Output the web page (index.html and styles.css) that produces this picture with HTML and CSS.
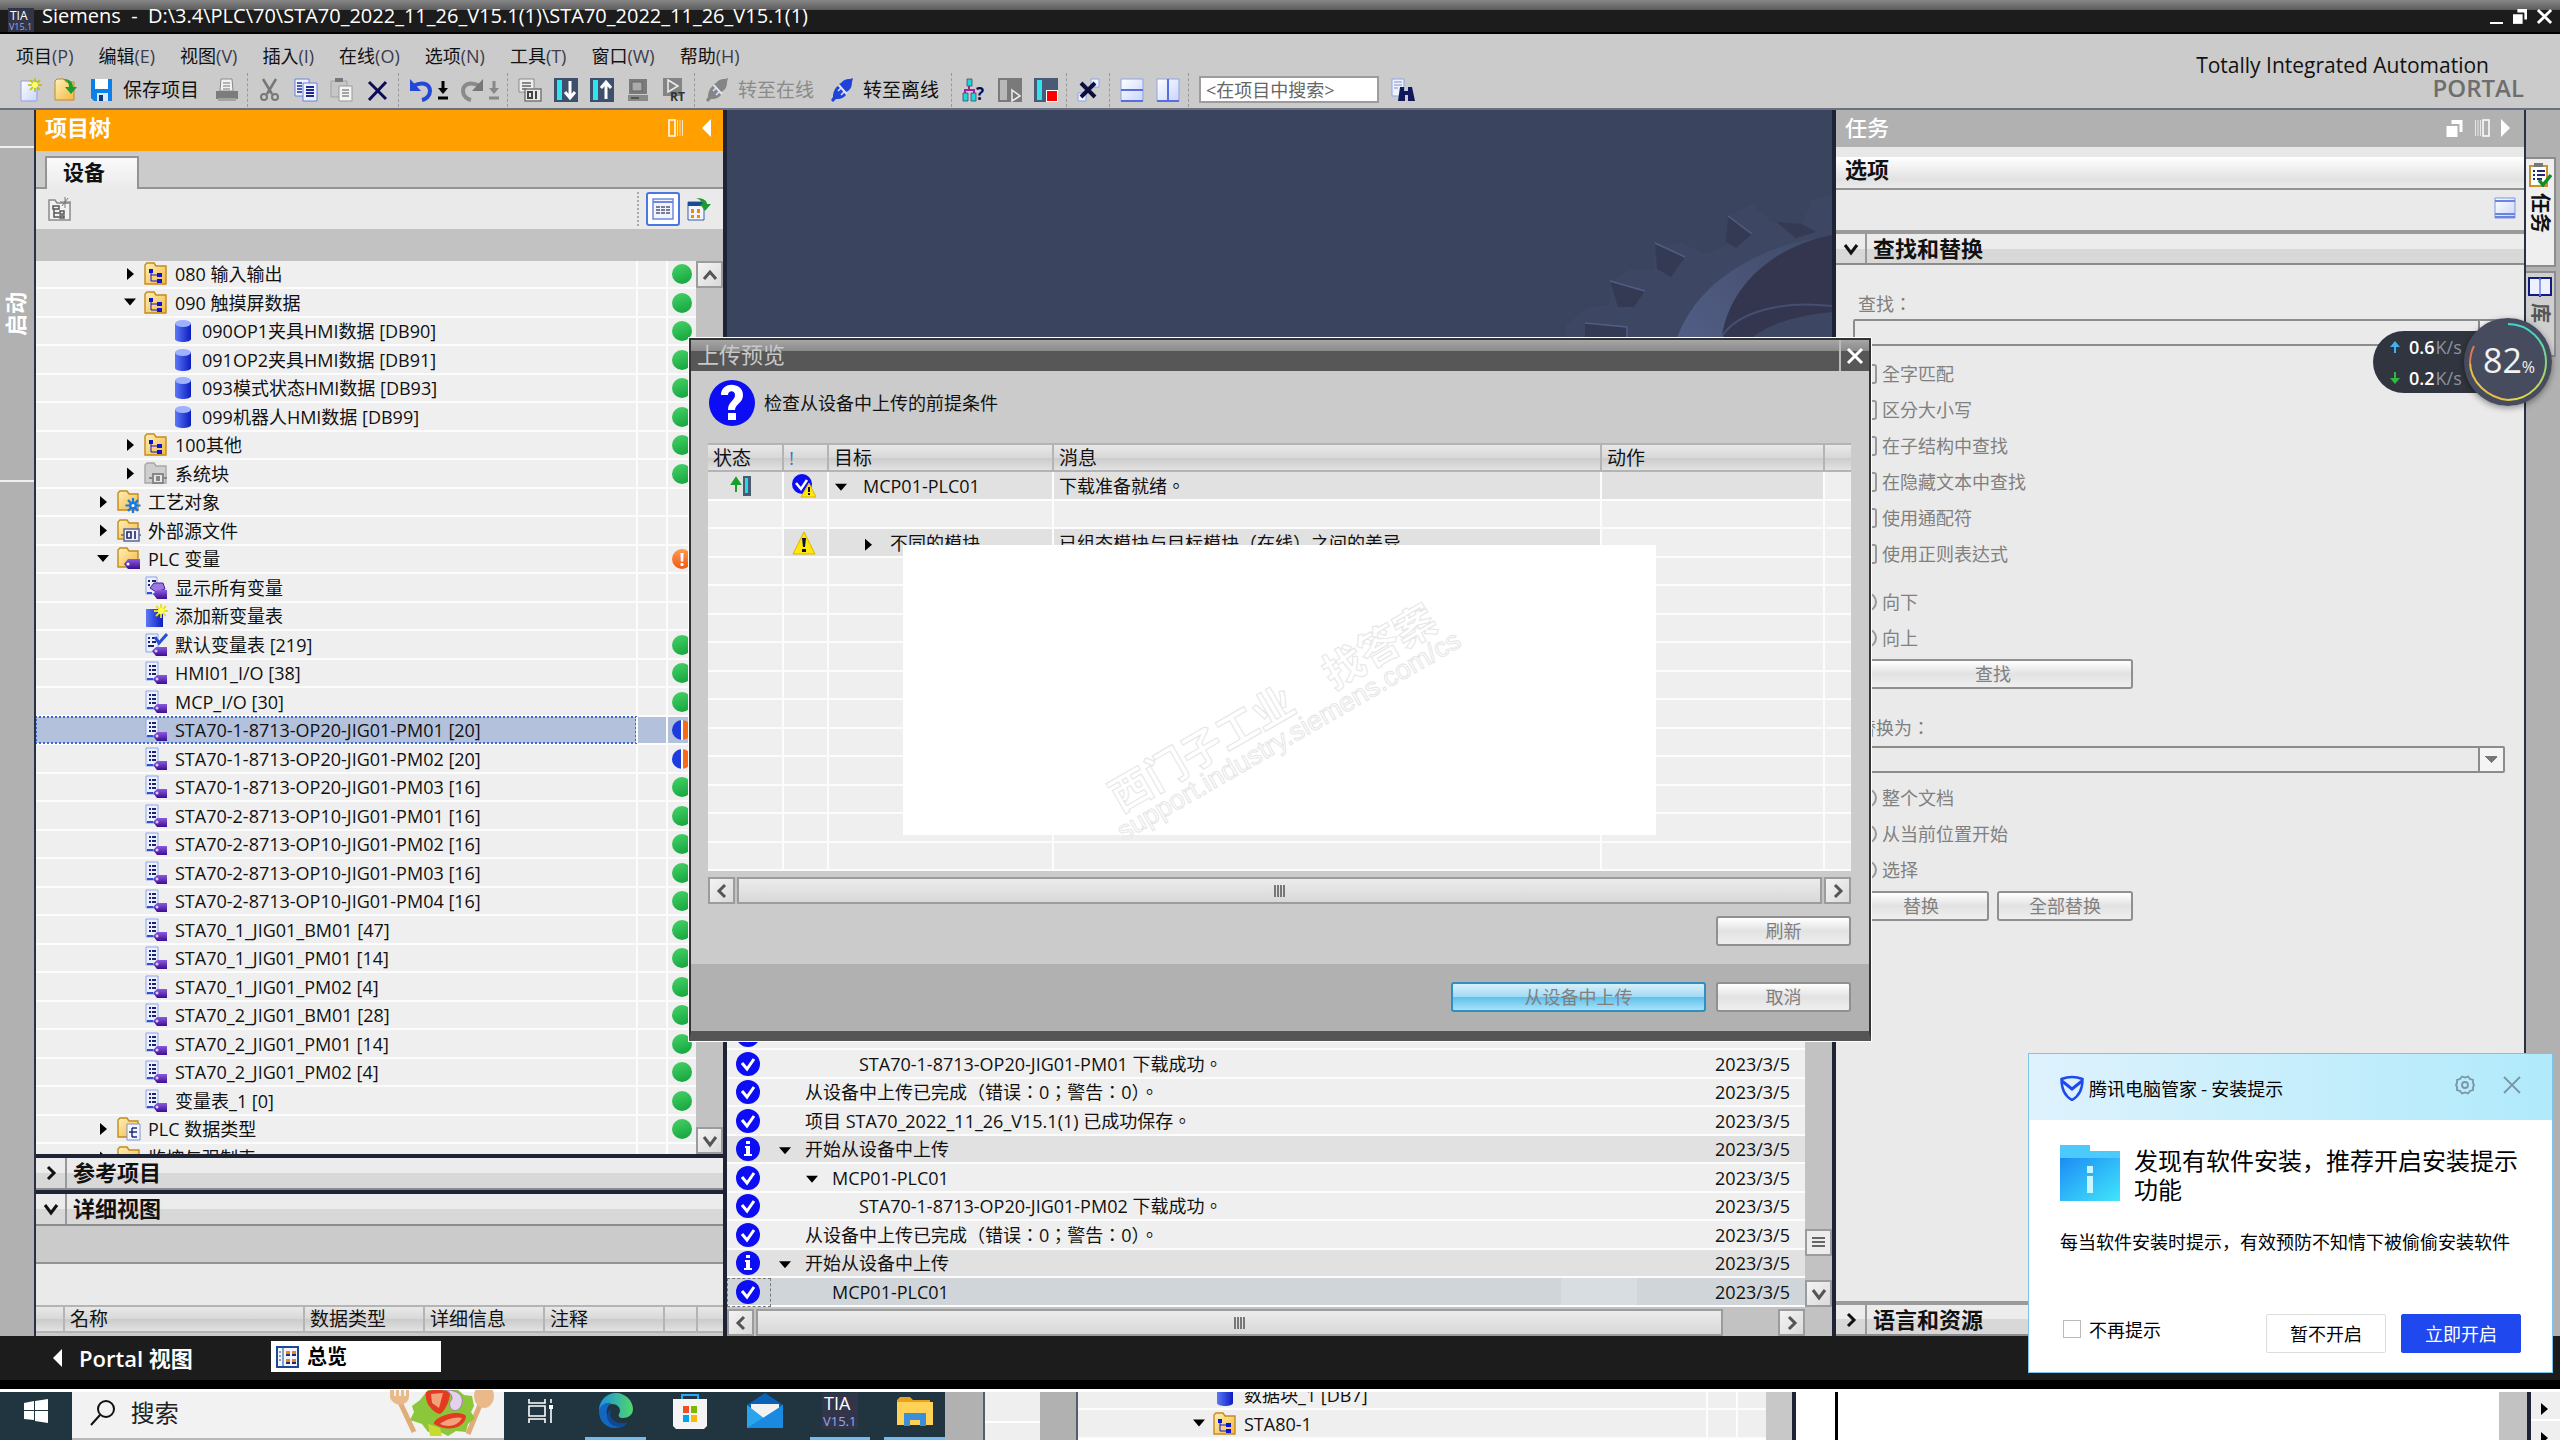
FILE: index.html
```html
<!DOCTYPE html>
<html lang="en">

<head>
  <meta charset="UTF-8">
  <meta name="viewport" content="width=device-width, initial-scale=1.0">
  <title>Siemens - STA70_2022_11_26_V15.1(1)</title>
  <link rel="stylesheet" href="styles.css">
</head>

<body>
  <!-- 图标 -->
  <svg class="sprite" width="0" height="0">
    <defs>
      <linearGradient id="gy" x1="0" y1="0" x2="1" y2="1"><stop offset="0" stop-color="#fff0b8"/><stop offset="1" stop-color="#f2b843"/></linearGradient>
      <linearGradient id="gb" x1="0" y1="0" x2="1" y2="0"><stop offset="0" stop-color="#5b78f8"/><stop offset="1" stop-color="#0c1cc0"/></linearGradient>
      <linearGradient id="gw" x1="0" y1="0" x2="1" y2="1"><stop offset="0" stop-color="#fff"/><stop offset="1" stop-color="#c9d4fb"/></linearGradient>
      <linearGradient id="gp" x1="0" y1="0" x2="0" y2="1"><stop offset="0" stop-color="#8a5be0"/><stop offset="1" stop-color="#3c0d90"/></linearGradient>
      <linearGradient id="edge1" x1="0" y1="0" x2="1" y2="0"><stop offset="0" stop-color="#1f8fe0"/><stop offset="1" stop-color="#4fd86a"/></linearGradient>
      <linearGradient id="fold" x1="0" y1="0" x2="1" y2="1"><stop offset="0" stop-color="#1c8cf5"/><stop offset="1" stop-color="#41e6fb"/></linearGradient>
      <linearGradient id="ring" x1="0" y1="0" x2="0" y2="1"><stop offset="0" stop-color="#3fd6d0"/><stop offset=".5" stop-color="#7fd680"/><stop offset="1" stop-color="#e8d84a"/></linearGradient>
      <linearGradient id="hub" x1="0" y1="1" x2="1" y2="0"><stop offset="0" stop-color="#56628c"/><stop offset="1" stop-color="#3f4966"/></linearGradient>
    </defs>
    <symbol id="folder" viewBox="0 0 24 24"><path d="M1 22V3l2-2h7l2 3h10v18z" fill="url(#gy)" stroke="#c58a1b" stroke-width="1.4"/></symbol>
    <symbol id="folder-group" viewBox="0 0 24 24"><path d="M1 22V3l2-2h7l2 3h10v18z" fill="url(#gy)" stroke="#c58a1b" stroke-width="1.4"/><path d="M5 7h4v4H5zM13 11h5v4h-5zM13 17h5v4h-5z" fill="#0a14d8"/><path d="M7 11v8h6M7 13h6" stroke="#0a14d8" fill="none"/></symbol>
    <symbol id="folder-sys" viewBox="0 0 24 24"><path d="M1 21V3l2-2h7l2 3h10v17z" fill="#cfcfcf" stroke="#a8a8a8" stroke-width="1.4"/><path d="M9 12h10v9H9zM5 16h4M19 16h4" fill="#e8e8e8" stroke="#888" stroke-width="2"/><path d="M12 14h4v5h-4z" fill="#888"/></symbol>
    <symbol id="folder-tech" viewBox="0 0 24 24"><path d="M1 20V3l2-2h7l2 3h9v16z" fill="url(#gy)" stroke="#c58a1b" stroke-width="1.4"/><path d="M16 8v15M8.500 15.500h15M11 10l10 11M21 10L11 21" stroke="#1878e8" stroke-width="2.200"/><circle cx="16" cy="15.500" r="4" fill="#1878e8"/><circle cx="16" cy="15.500" r="1.500" fill="#fff"/></symbol>
    <symbol id="folder-src" viewBox="0 0 24 24"><path d="M1 20V3l2-2h7l2 3h9v16z" fill="url(#gy)" stroke="#c58a1b" stroke-width="1.4"/><path d="M7 10h15v12H7zM4 16h3M22 16h2" fill="#eef" stroke="#5c6a94" stroke-width="1.5"/><path d="M10 13h4v6h-4zM18 12v8" fill="none" stroke="#222a60" stroke-width="1.600"/></symbol>
    <symbol id="folder-tag" viewBox="0 0 24 24"><path d="M1 20V3l2-2h7l2 3h9v16z" fill="url(#gy)" stroke="#c58a1b" stroke-width="1.4"/><path d="M7 17l4-5h12v10H11z" fill="url(#gp)"/><circle cx="11" cy="17" r="1.500" fill="#fff"/></symbol>
    <symbol id="folder-type" viewBox="0 0 24 24"><path d="M1 20V3l2-2h7l2 3h9v16z" fill="url(#gy)" stroke="#c58a1b" stroke-width="1.4"/><path d="M10 7h13v16H10z" fill="#f3f6ff" stroke="#7d92d8"/><path d="M15 11v9M15 11h5M15 15h5M15 20h5M12 15h3" stroke="#222a80" stroke-width="1.500"/></symbol>
    <symbol id="db" viewBox="0 0 24 24"><path d="M4 4v16c0 4 16 4 16 0V4z" fill="url(#gb)"/><ellipse cx="12" cy="4.500" rx="8" ry="3.500" fill="#9db1ff"/></symbol>
    <symbol id="tags" viewBox="0 0 24 24"><path d="M2 1h12v18H2z" fill="#eaf0ff" stroke="#8fa3e6"/><path d="M5 5h2M8 5h4M5 9h2M8 9h4M5 13h2M8 13h4" stroke="#1d2370" stroke-width="2"/><path d="M3 18h6" stroke="#2b50d0" stroke-width="2"/><path d="M9 18l4-4h10v9H13z" fill="url(#gp)"/><circle cx="13" cy="18" r="1.500" fill="#d8c8ff"/></symbol>
    <symbol id="tags-all" viewBox="0 0 24 24"><path d="M2 1h11v17H2z" fill="#eaf0ff" stroke="#8fa3e6"/><path d="M4 5h2M8 5h4M4 9h2" stroke="#1d2370" stroke-width="2"/><path d="M6 12l4-5h9l2 6-9 3z" fill="#9a78de" stroke="#4b1aa0"/><path d="M3 17h5" stroke="#2b50d0" stroke-width="2"/><path d="M9 18l4-4h10v9H13z" fill="url(#gp)"/></symbol>
    <symbol id="tags-new" viewBox="0 0 24 24"><path d="M2 5h17v18H2z" fill="url(#gb)"/><path d="M17 0v14M10 7h14M12 2l10 10M22 2L12 12" stroke="#e8e020" stroke-width="1.800"/><circle cx="17" cy="7" r="3" fill="#ffff50"/></symbol>
    <symbol id="tags-def" viewBox="0 0 24 24"><path d="M2 1h12v18H2z" fill="#eaf0ff" stroke="#8fa3e6"/><path d="M4 5h2M8 5h4M4 9h2M8 9h4M4 13h6" stroke="#1d2370" stroke-width="2"/><path d="M11 4l4 6 8-9" fill="none" stroke="#2450d8" stroke-width="3"/><path d="M8 18l4-4h11v9H12z" fill="url(#gp)"/><circle cx="12" cy="18" r="1.500" fill="#d8c8ff"/></symbol>
    <symbol id="check" viewBox="0 0 24 24"><circle cx="12" cy="12" r="12" fill="#0c0cf5"/><path d="M6 11l5 6 7-10" fill="none" stroke="#fff" stroke-width="3"/></symbol>
    <symbol id="info" viewBox="0 0 24 24"><circle cx="12" cy="12" r="12" fill="#0c0cf5"/><path d="M10 4h4v3h-4zM9 9h5v8h2v2H8v-2h2v-6H9z" fill="#fff"/></symbol>
    <symbol id="warn" viewBox="0 0 24 24"><path d="M12 1l11 22H1z" fill="#ffe70a" stroke="#d8b400"/><path d="M10 7h4l-1 9h-2zM10 18h4v3h-4z" fill="#0a0a50"/></symbol>
    <symbol id="check-warn" viewBox="0 0 24 24"><circle cx="10" cy="10" r="10" fill="#0c0cf5"/><path d="M4 9l5 6 6-9" fill="none" stroke="#fff" stroke-width="2.500"/><path d="M17 9l7 14H9z" fill="#ffe70a" stroke="#d8b400"/><path d="M16 13h2v5h-2zM16 19h2v2h-2z" fill="#0a0a50"/></symbol>
    <symbol id="up-plc" viewBox="0 0 24 24"><path d="M6 18V8M2 10l4-6 4 6z" stroke="#18a028" stroke-width="2" fill="#18a028"/><path d="M13 2h8v20h-8z" fill="#4a5a70"/><path d="M15 4h3v15h-3z" fill="#18e0e8"/></symbol>
    <symbol id="plug" viewBox="0 0 24 24"><path d="M11 5c3-4 7-4 9-4l3-1-1 4c0 4-1 7-4 9l-2 1-7-8zM8 8l8 9c-3 4-7 4-10 4l-3 3-2-2 2-3c0-5 2-9 5-11z" fill="currentColor"/><path d="M9 7l8 9M8 13l3-3M11 17l3-3" stroke="#dfe5ff" stroke-width="1.500"/></symbol>
    <symbol id="dock" viewBox="0 0 16 18"><path d="M1 1h6v16H1z" fill="none" stroke="#fff" stroke-width="1.500"/><path d="M9.500 1v16M12 1v16M14.500 1v16" stroke="#fff" stroke-opacity=".7"/></symbol>
    <symbol id="restore" viewBox="0 0 16 18"><path d="M5 1h11v12h-3V5H5z" fill="#fff"/><path d="M0 7h11v11H0z" fill="#fff"/></symbol>
    <symbol id="left" viewBox="0 0 10 18"><path d="M10 0v18L1 9z" fill="#fff"/></symbol>
    <symbol id="right" viewBox="0 0 10 18"><path d="M0 0v18l9-9z" fill="#fff"/></symbol>
    <symbol id="ch-down" viewBox="0 0 16 16"><path d="M2 4l6 8 6-8" fill="none" stroke="currentColor" stroke-width="3"/></symbol>
    <symbol id="ch-up" viewBox="0 0 16 16"><path d="M2 12l6-7 6 7" fill="none" stroke="currentColor" stroke-width="3"/></symbol>
    <symbol id="ch-right" viewBox="0 0 16 16"><path d="M5 2l6 6-6 6" fill="none" stroke="currentColor" stroke-width="3"/></symbol>
    <symbol id="ch-left" viewBox="0 0 16 16"><path d="M11 2L5 8l6 6" fill="none" stroke="currentColor" stroke-width="3"/></symbol>
    <symbol id="close" viewBox="0 0 18 18"><path d="M2 2l14 14M16 2L2 16" stroke="currentColor" stroke-width="3"/></symbol>
  </svg>

  <!-- 标题栏 -->
  <header class="titlebar">
    <svg class="logo" viewBox="0 0 26 24"><path d="M0 0h26v24H0z" fill="#323548"/><text x="2" y="12" font-size="12" fill="#fff">TIA</text><text x="1" y="22" font-size="9" fill="#98a6e8">V15.1</text></svg>
    <h1>Siemens&nbsp; -&nbsp; D:\3.4\PLC\70\STA70_2022_11_26_V15.1(1)\STA70_2022_11_26_V15.1(1)</h1>
    <div class="win-btns">
      <button aria-label="最小化"><svg width="14" height="18"><path d="M0 16h13" stroke="#fff" stroke-width="2"/></svg></button>
      <button aria-label="还原"><svg width="14" height="16"><use href="#restore"/></svg></button>
      <button aria-label="关闭"><svg width="17" height="17"><use href="#close"/></svg></button>
    </div>
  </header>

  <!-- 菜单和工具栏 -->
  <div class="menus">
    <div>
      <nav class="menu">
        <button>项目<span>(P)</span></button>
        <button>编辑<span>(E)</span></button>
        <button>视图<span>(V)</span></button>
        <button>插入<span>(I)</span></button>
        <button>在线<span>(O)</span></button>
        <button>选项<span>(N)</span></button>
        <button>工具<span>(T)</span></button>
        <button>窗口<span>(W)</span></button>
        <button>帮助<span>(H)</span></button>
      </nav>
      <div class="toolbar">
        <button aria-label="新建"><svg viewBox="0 0 24 24"><path d="M3 3h16v20H3z" fill="url(#gw)" stroke="#8ea0e0"/><path d="M17 0v14M10 7h14M12 2l10 10M22 2L12 12" stroke="#b8c000" stroke-width="1.600"/><circle cx="17" cy="7" r="3" fill="#ffff60"/></svg></button>
        <button aria-label="打开"><svg viewBox="0 0 24 24"><path d="M1 22V3l2-2h7l2 3h8v18z" fill="url(#gy)" stroke="#c58a1b"/><path d="M9 1c7 0 10 3 10 8h4l-6 7-6-7h4c0-4-2-6-6-8z" fill="#1d9a30"/></svg></button>
        <button aria-label="保存项目"><svg viewBox="0 0 24 24"><path d="M1 1h21v22H4l-3-3z" fill="#0a80e8"/><path d="M5 1h13v10H5z" fill="#fff"/><path d="M7 15h11v8H7z" fill="#d8e8f8"/><path d="M9 17h4v6H9z" fill="#0a3a80"/></svg><span>保存项目</span></button>
        <button aria-label="打印"><svg viewBox="0 0 24 24"><path d="M6 1h11l1 12H5z" fill="#f2f2f2" stroke="#888"/><path d="M8 5h7M8 8h7M8 11h7" stroke="#777"/><path d="M1 13h22v8H1z" fill="#7c7c7c"/><path d="M3 20h18v3H3z" fill="#a2a2a2"/></svg></button>
        <i class="sep"></i>
        <button aria-label="剪切"><svg viewBox="0 0 24 24"><path d="M5 1l9 15M18 1L9 16" stroke="#777" stroke-width="2.500"/><circle cx="6" cy="19" r="3" fill="none" stroke="#777" stroke-width="2"/><circle cx="17" cy="19" r="3" fill="none" stroke="#777" stroke-width="2"/></svg></button>
        <button aria-label="复制"><svg viewBox="0 0 24 24"><path d="M1 1h14v17H1z" fill="#eef2ff" stroke="#6a80d8"/><path d="M3 5h5M3 8h5M3 11h5M3 14h5" stroke="#1c2a90" stroke-width="1.500"/><path d="M9 5h14v18H9z" fill="#eef2ff" stroke="#6a80d8"/><path d="M12 9h8M12 12h8M12 15h8M12 18h8" stroke="#1c2a90" stroke-width="2"/></svg></button>
        <button aria-label="粘贴"><svg viewBox="0 0 24 24"><path d="M1 3h16v16H1z" fill="#c6c6c6" stroke="#a2a2a2"/><path d="M5 0h8v4H5z" fill="#777"/><path d="M9 8h13v15H9z" fill="#f4f4f4" stroke="#999"/><path d="M12 12h7M12 15h7M12 18h7" stroke="#888" stroke-width="1.500"/></svg></button>
        <button aria-label="删除"><svg viewBox="0 0 24 24"><path d="M3 4l17 17M20 4L3 22" stroke="#0c0c58" stroke-width="3"/></svg></button>
        <i class="sep"></i>
        <button class="undo" aria-label="撤销"><svg viewBox="0 0 24 24"><path d="M4 8c12-6 17 0 17 5s-4 8-8 9" fill="none" stroke="#2348d8" stroke-width="4"/><path d="M1 1v12h11z" fill="#2348d8"/></svg><svg class="pm" viewBox="0 0 10 20"><path d="M5 1v9M0 18h10" stroke="#000" stroke-width="3"/><path d="M0 8h10l-5 6z" fill="#000"/></svg></button>
        <button class="undo" aria-label="重做"><svg viewBox="0 0 24 24"><path d="M20 8C8 2 3 8 3 13s4 8 8 9" fill="none" stroke="#8a8a8a" stroke-width="4"/><path d="M23 1v12H12z" fill="#777"/></svg><svg class="pm" viewBox="0 0 10 20"><path d="M5 1v9M0 18h10" stroke="#888" stroke-width="3"/><path d="M0 8h10l-5 6z" fill="#888"/></svg></button>
        <i class="sep"></i>
        <button aria-label="编译"><svg viewBox="0 0 24 24"><path d="M1 1h15v13H1z" fill="#efefef" stroke="#8a8a8a"/><path d="M4 5h9M4 8h9M4 11h5" stroke="#666" stroke-width="1.500"/><path d="M7 11h16v12H7z" fill="#e8e8e8" stroke="#777" stroke-width="1.500"/><path d="M10 14h4v6h-4zM18 13v8" fill="none" stroke="#444" stroke-width="2"/></svg></button>
        <button aria-label="下载到设备"><svg viewBox="0 0 24 24"><path d="M0 0h24v24H0z" fill="#3e4f6c"/><path d="M3 2h5v20H3z" fill="#2ee4ee"/><path d="M16 3v16M11 14l5 6 5-6" stroke="#fff" stroke-width="3" fill="none"/></svg></button>
        <button aria-label="从设备上传"><svg viewBox="0 0 24 24"><path d="M0 0h24v24H0z" fill="#3e4f6c"/><path d="M3 2h5v20H3z" fill="#2ee4ee"/><path d="M16 21V5M11 10l5-6 5 6" stroke="#fff" stroke-width="3" fill="none"/></svg></button>
        <button aria-label="启动仿真"><svg viewBox="0 0 24 24"><path d="M3 1h18v15H3z" fill="#7a7a7a"/><path d="M6 4h10v9H6z" fill="#aaa" stroke="#666"/><path d="M2 17h20v6H2z" fill="#888"/><path d="M5 20h8" stroke="#555" stroke-width="2"/></svg></button>
        <button aria-label="启动运行系统"><svg viewBox="0 0 24 24"><path d="M1 0h19v18H1z" fill="#848484"/><path d="M6 2l10 6-10 6z" fill="none" stroke="#eee" stroke-width="1.500"/><text x="8" y="23" font-size="12" font-weight="700" fill="#333">RT</text></svg></button>
        <i class="sep"></i>
        <button disabled><svg class="grey"><use href="#plug"/></svg><span>转至在线</span></button>
        <button><svg class="blue"><use href="#plug"/></svg><span>转至离线</span></button>
        <i class="sep"></i>
        <button aria-label="可访问的设备"><svg viewBox="0 0 24 24"><path d="M5 1h5v7H5zM1 15h5v8H1zM9 15h5v8H9z" fill="#1fd6dc" stroke="#3a4a6a" stroke-width=".8"/><path d="M7 8v4M3 15v-3h9v3" stroke="#a020a0" stroke-width="2" fill="none"/><text x="14" y="22" font-size="17" font-weight="700" fill="#0c0c58">?</text></svg></button>
        <button aria-label="启动 CPU"><svg viewBox="0 0 24 24"><path d="M0 0h24v24H0z" fill="#7a7a7a"/><path d="M2 2h7v20H2z" fill="#b8b8b8"/><path d="M14 12l8 6-8 5z" fill="#777" stroke="#eee" stroke-width="1.500"/></svg></button>
        <button aria-label="停止 CPU"><svg viewBox="0 0 24 24"><path d="M0 0h24v24H0z" fill="#4a5a76"/><path d="M3 2h5v20H3z" fill="#2ee4ee"/><path d="M12 12h12v12H12z" fill="#fff"/><path d="M13 13h10v10H13z" fill="#f00"/></svg></button>
        <i class="sep"></i>
        <button aria-label="交叉引用"><svg viewBox="0 0 24 24"><path d="M14 1h8v8h-8zM1 15h8v8H1z" fill="#eef2ff" stroke="#8fa3e6"/><path d="M4 5l14 14M18 5L4 19" stroke="#0c0c40" stroke-width="4"/></svg></button>
        <i class="sep"></i>
        <button aria-label="水平拆分"><svg viewBox="0 0 24 24"><path d="M1 1h22v22H1z" fill="url(#gw)" stroke="#8fa3e6"/><path d="M1 12h22M1 23h22" stroke="#5470e0" stroke-width="2"/></svg></button>
        <button aria-label="垂直拆分"><svg viewBox="0 0 24 24"><path d="M1 1h22v22H1z" fill="url(#gw)" stroke="#8fa3e6"/><path d="M12 1v22M1 23h22" stroke="#5470e0" stroke-width="2"/></svg></button>
        <i class="sep"></i>
        <input type="text" aria-label="在项目中搜索" placeholder="&lt;在项目中搜索&gt;">
        <button aria-label="搜索"><svg viewBox="0 0 24 24"><path d="M1 1h12v17H1z" fill="#eef2ff" stroke="#8fa3e6"/><path d="M3 4h8M3 7h8M3 10h4" stroke="#8090c8"/><path d="M9 9h4v4h4V9h4l3 14h-7v-6h-3v6H7z" fill="#10185a"/></svg></button>
      </div>
    </div>
    <div class="brand">
      <p>Totally Integrated Automation</p>
      <strong>PORTAL</strong>
    </div>
  </div>

  <main class="work">
    <aside class="strip-left"><div class="gap"></div><button>启动</button></aside>

    <!-- 项目树 -->
    <section class="tree-panel">
      <div class="tree-title">
        <h2>项目树</h2>
        <svg width="16" height="18"><use href="#dock"/></svg>
        <svg width="10" height="18"><use href="#left"/></svg>
      </div>
      <div class="tabs"><button>设备</button></div>
      <div class="tree-tools">
        <svg width="24" height="24" viewBox="0 0 24 24"><path d="M1 23V3h6l2 3h13v17z" fill="#f2f2f2" stroke="#8a8a8a" stroke-width="1.500"/><path d="M5 9h6v3H5zM6 12v8h5M6 16h5M12 14h4v3h-4zM12 19h4v2h-4z" stroke="#555" fill="none" stroke-width="1.500"/><path d="M17 0v11M12 5h11M20 1l-6 8" stroke="#777"/></svg>
        <i class="dots"></i>
        <button class="on" aria-label="列表"><svg width="22" height="22" viewBox="0 0 22 22"><path d="M1 1h20v20H1z" fill="#f2f5ff" stroke="#7088dc" stroke-width="1.500"/><path d="M1 4h20" stroke="#7088dc" stroke-width="2"/><path d="M4 9h14M4 12h14M4 15h14" stroke="#4c5470" stroke-width="1.500" stroke-dasharray="4 1"/></svg></button>
        <button aria-label="导出"><svg width="24" height="24" viewBox="0 0 24 24"><path d="M1 5h16v18H1z" fill="#f4f4ff" stroke="#3c5ca0"/><path d="M1 5h16v4H1z" fill="#1c4a90"/><path d="M4 12h3v4H4zM10 12h3v4h-3zM4 18h3v3H4zM10 18h3v3h-3z" fill="#e88a10"/><path d="M9 1c8 0 11 3 11 6h4l-6 7-5-7h3c-1-3-3-4-7-6z" fill="#1d9a30"/></svg></button>
      </div>
      <div class="band"></div>
      <div class="tree-body">
        <ul class="tree">
          <li class="l3"><div><i class="arrow right"></i><svg><use href="#folder-group"/></svg>080 输入输出</div><span></span><span><b class="ok"></b></span></li>
          <li class="l3"><div><i class="arrow down"></i><svg><use href="#folder-group"/></svg>090 触摸屏数据</div><span></span><span><b class="ok"></b></span></li>
          <li class="l4"><div><i class="arrow"></i><svg><use href="#db"/></svg>090OP1夹具HMI数据 [DB90]</div><span></span><span><b class="ok"></b></span></li>
          <li class="l4"><div><i class="arrow"></i><svg><use href="#db"/></svg>091OP2夹具HMI数据 [DB91]</div><span></span><span><b class="ok"></b></span></li>
          <li class="l4"><div><i class="arrow"></i><svg><use href="#db"/></svg>093模式状态HMI数据 [DB93]</div><span></span><span><b class="ok"></b></span></li>
          <li class="l4"><div><i class="arrow"></i><svg><use href="#db"/></svg>099机器人HMI数据 [DB99]</div><span></span><span><b class="ok"></b></span></li>
          <li class="l3"><div><i class="arrow right"></i><svg><use href="#folder-group"/></svg>100其他</div><span></span><span><b class="ok"></b></span></li>
          <li class="l3"><div><i class="arrow right"></i><svg><use href="#folder-sys"/></svg>系统块</div><span></span><span><b class="ok"></b></span></li>
          <li class="l2"><div><i class="arrow right"></i><svg><use href="#folder-tech"/></svg>工艺对象</div><span></span><span></span></li>
          <li class="l2"><div><i class="arrow right"></i><svg><use href="#folder-src"/></svg>外部源文件</div><span></span><span></span></li>
          <li class="l2"><div><i class="arrow down"></i><svg><use href="#folder-tag"/></svg>PLC 变量</div><span></span><span><b class="alert">!</b></span></li>
          <li class="l3"><div><i class="arrow"></i><svg><use href="#tags-all"/></svg>显示所有变量</div><span></span><span></span></li>
          <li class="l3"><div><i class="arrow"></i><svg><use href="#tags-new"/></svg>添加新变量表</div><span></span><span></span></li>
          <li class="l3"><div><i class="arrow"></i><svg><use href="#tags-def"/></svg>默认变量表 [219]</div><span></span><span><b class="ok"></b></span></li>
          <li class="l3"><div><i class="arrow"></i><svg><use href="#tags"/></svg>HMI01_I/O [38]</div><span></span><span><b class="ok"></b></span></li>
          <li class="l3"><div><i class="arrow"></i><svg><use href="#tags"/></svg>MCP_I/O [30]</div><span></span><span><b class="ok"></b></span></li>
          <li class="l3 selected"><div><i class="arrow"></i><svg><use href="#tags"/></svg>STA70-1-8713-OP20-JIG01-PM01 [20]</div><span></span><span><b class="half"></b></span></li>
          <li class="l3"><div><i class="arrow"></i><svg><use href="#tags"/></svg>STA70-1-8713-OP20-JIG01-PM02 [20]</div><span></span><span><b class="half"></b></span></li>
          <li class="l3"><div><i class="arrow"></i><svg><use href="#tags"/></svg>STA70-1-8713-OP20-JIG01-PM03 [16]</div><span></span><span><b class="ok"></b></span></li>
          <li class="l3"><div><i class="arrow"></i><svg><use href="#tags"/></svg>STA70-2-8713-OP10-JIG01-PM01 [16]</div><span></span><span><b class="ok"></b></span></li>
          <li class="l3"><div><i class="arrow"></i><svg><use href="#tags"/></svg>STA70-2-8713-OP10-JIG01-PM02 [16]</div><span></span><span><b class="ok"></b></span></li>
          <li class="l3"><div><i class="arrow"></i><svg><use href="#tags"/></svg>STA70-2-8713-OP10-JIG01-PM03 [16]</div><span></span><span><b class="ok"></b></span></li>
          <li class="l3"><div><i class="arrow"></i><svg><use href="#tags"/></svg>STA70-2-8713-OP10-JIG01-PM04 [16]</div><span></span><span><b class="ok"></b></span></li>
          <li class="l3"><div><i class="arrow"></i><svg><use href="#tags"/></svg>STA70_1_JIG01_BM01 [47]</div><span></span><span><b class="ok"></b></span></li>
          <li class="l3"><div><i class="arrow"></i><svg><use href="#tags"/></svg>STA70_1_JIG01_PM01 [14]</div><span></span><span><b class="ok"></b></span></li>
          <li class="l3"><div><i class="arrow"></i><svg><use href="#tags"/></svg>STA70_1_JIG01_PM02 [4]</div><span></span><span><b class="ok"></b></span></li>
          <li class="l3"><div><i class="arrow"></i><svg><use href="#tags"/></svg>STA70_2_JIG01_BM01 [28]</div><span></span><span><b class="ok"></b></span></li>
          <li class="l3"><div><i class="arrow"></i><svg><use href="#tags"/></svg>STA70_2_JIG01_PM01 [14]</div><span></span><span><b class="ok"></b></span></li>
          <li class="l3"><div><i class="arrow"></i><svg><use href="#tags"/></svg>STA70_2_JIG01_PM02 [4]</div><span></span><span><b class="ok"></b></span></li>
          <li class="l3"><div><i class="arrow"></i><svg><use href="#tags"/></svg>变量表_1 [0]</div><span></span><span><b class="ok"></b></span></li>
          <li class="l2"><div><i class="arrow right"></i><svg><use href="#folder-type"/></svg>PLC 数据类型</div><span></span><span><b class="ok"></b></span></li>
          <li class="l2"><div><i class="arrow right"></i><svg><use href="#folder"/></svg>监控与强制表</div><span></span><span></span></li>
        </ul>
        <div class="vscroll">
          <button aria-label="向上滚动"><svg width="16" height="16"><use href="#ch-up"/></svg></button>
          <button aria-label="向下滚动"><svg width="16" height="16"><use href="#ch-down"/></svg></button>
        </div>
      </div>
      <div class="bar split"><button aria-label="展开"><svg width="16" height="16"><use href="#ch-right"/></svg></button><h2>参考项目</h2></div>
      <div class="bar split"><button aria-label="折叠"><svg width="16" height="16"><use href="#ch-down"/></svg></button><h2>详细视图</h2></div>
      <div class="detail-tabs"></div>
      <div class="detail-tools"></div>
      <table class="detail">
        <colgroup><col class="c27"><col><col class="c120"><col class="c120"><col class="c120"><col class="c33"><col class="c27"></colgroup>
        <tr><th></th><th>名称</th><th>数据类型</th><th>详细信息</th><th>注释</th><th></th><th></th></tr>
      </table>
    </section>

    <!-- 工作区和消息 -->
    <section class="center">
      <div class="canvas">
        <svg class="gear" width="300" height="300" viewBox="0 0 300 300">
          <path d="M300 34l-20 6-10 24-30-2-20-18-24 12-2 30-20 8-26-12-24 6-2 22-24 0-20 12v22l-22 4-22 16v20l-10 96h276z" fill="#3d4662"/>
          <path d="M78 121l35 10-11 16H86zM53 163l42 4v60H53zM123 83l30 14-14 20-14-8zM196 56l24 18-16 14-10-6zM270 64l-26-2 20 16 20-6z" fill="#353a54"/>
          <path d="M78 121l35 10M53 163l42 4v20M123 83l30 14M196 56l24 18" stroke="#525d86" fill="none" stroke-width="1.500"/>
          <path d="M138 220c0-80 70-132 162-145v20c-60 12-104 50-104 125z" fill="url(#hub)"/>
          <path d="M190 175c10-56 58-90 110-100v77c-40 4-76 14-92 40z" fill="#34364f"/>
          <path d="M190 176c16-24 60-36 110-30" stroke="#454f72" fill="none" stroke-width="2"/>
        </svg>
      </div>
      <div class="messages">
        <table>
          <colgroup><col class="c44"><col><col class="c76"><col class="c168"></colgroup>
          <tr><td><svg><use href="#check"/></svg></td><td class="m1"><i class="arrow down"></i>MCP01-PLC01</td><td></td><td>2023/3/5</td></tr>
          <tr><td><svg><use href="#check"/></svg></td><td class="m2"><i class="arrow"></i>STA70-1-8713-OP20-JIG01-PM01 下载成功。</td><td></td><td>2023/3/5</td></tr>
          <tr><td><svg><use href="#check"/></svg></td><td><i class="arrow"></i>从设备中上传已完成（错误：0；警告：0）。</td><td></td><td>2023/3/5</td></tr>
          <tr><td><svg><use href="#check"/></svg></td><td><i class="arrow"></i>项目 STA70_2022_11_26_V15.1(1) 已成功保存。</td><td></td><td>2023/3/5</td></tr>
          <tr class="group"><td><svg><use href="#info"/></svg></td><td><i class="arrow down"></i>开始从设备中上传</td><td></td><td>2023/3/5</td></tr>
          <tr><td><svg><use href="#check"/></svg></td><td class="m1"><i class="arrow down"></i>MCP01-PLC01</td><td></td><td>2023/3/5</td></tr>
          <tr><td><svg><use href="#check"/></svg></td><td class="m2"><i class="arrow"></i>STA70-1-8713-OP20-JIG01-PM02 下载成功。</td><td></td><td>2023/3/5</td></tr>
          <tr><td><svg><use href="#check"/></svg></td><td><i class="arrow"></i>从设备中上传已完成（错误：0；警告：0）。</td><td></td><td>2023/3/5</td></tr>
          <tr class="group"><td><svg><use href="#info"/></svg></td><td><i class="arrow down"></i>开始从设备中上传</td><td></td><td>2023/3/5</td></tr>
          <tr class="current"><td><svg><use href="#check"/></svg></td><td class="m1"><i class="arrow"></i>MCP01-PLC01</td><td></td><td>2023/3/5</td></tr>
        </table>
        <div class="vscroll">
          <div class="thumb"></div>
          <button aria-label="向下滚动"><svg width="16" height="16"><use href="#ch-down"/></svg></button>
        </div>
        <div class="hscroll">
          <button aria-label="向左滚动"><svg width="16" height="16"><use href="#ch-left"/></svg></button>
          <div class="thumb"></div>
          <button class="push" aria-label="向右滚动"><svg width="16" height="16"><use href="#ch-right"/></svg></button>
        </div>
      </div>
    </section>

    <!-- 任务卡 -->
    <section class="tasks">
      <div class="task-title">
        <h2>任务</h2>
        <svg width="17" height="18"><use href="#restore"/></svg>
        <svg class="flip" width="16" height="18"><use href="#dock"/></svg>
        <svg width="10" height="18"><use href="#right"/></svg>
      </div>
      <div class="options"><h2>选项</h2></div>
      <div class="task-tools"><svg width="22" height="22" viewBox="0 0 22 22"><path d="M1 1h20v20H1z" fill="url(#gw)" stroke="#7f96e4"/><path d="M1 4h20M1 17h20M1 20h20" stroke="#6a84e0" stroke-width="2"/></svg></div>
      <div class="bar"><button aria-label="折叠"><svg width="16" height="16"><use href="#ch-down"/></svg></button><h2>查找和替换</h2></div>
      <form class="find">
        <label for="find">查找：</label>
        <select id="find" disabled><option></option></select>
        <div class="opts">
          <label><input type="checkbox" disabled>全字匹配</label>
          <label><input type="checkbox" disabled>区分大小写</label>
          <label><input type="checkbox" disabled>在子结构中查找</label>
          <label><input type="checkbox" disabled>在隐藏文本中查找</label>
          <label><input type="checkbox" disabled>使用通配符</label>
          <label><input type="checkbox" disabled>使用正则表达式</label>
        </div>
        <div class="opts">
          <label><input type="radio" name="dir" disabled>向下</label>
          <label><input type="radio" name="dir" disabled>向上</label>
        </div>
        <div class="btns"><button class="btn" type="button" disabled>查找</button></div>
        <label for="replace">替换为：</label>
        <select id="replace" disabled><option></option></select>
        <div class="opts range">
          <label><input type="radio" name="range" disabled>整个文档</label>
          <label><input type="radio" name="range" disabled>从当前位置开始</label>
          <label><input type="radio" name="range" disabled>选择</label>
        </div>
        <div class="btns"><button class="btn" type="button" disabled>替换</button><button class="btn" type="button" disabled>全部替换</button></div>
      </form>
      <div class="bar"><button aria-label="展开"><svg width="16" height="16"><use href="#ch-right"/></svg></button><h2>语言和资源</h2></div>
    </section>

    <aside class="strip-right">
      <button class="tab-task"><svg width="24" height="24" viewBox="0 0 24 24"><path d="M2 3h17v20H2z" fill="#fff" stroke="#c9952b" stroke-width="2"/><path d="M6 0h9v4H6z" fill="#777"/><path d="M5 8h2M9 8h8M5 12h2M9 12h8M5 16h2M9 16h5" stroke="#22287a" stroke-width="2"/><path d="M11 17l4 5 8-10" fill="none" stroke="#158a26" stroke-width="3.500"/></svg>任务</button>
      <button class="tab-lib"><svg width="24" height="20" viewBox="0 0 24 20"><path d="M1 1h10l1 1 1-1h10v17H13l-1 1-1-1H1z" fill="#eef2ff" stroke="#101c80" stroke-width="2"/><path d="M12 1v18" stroke="#6a84e0" stroke-width="1.500"/></svg>库</button>
    </aside>
  </main>

  <footer class="status">
    <button class="portal"><svg width="10" height="18"><use href="#left"/></svg>Portal 视图</button>
    <button class="overview"><svg width="23" height="22" viewBox="0 0 23 22"><path d="M1 1h21v20H1z" fill="#f2f5ff" stroke="#1c4a90" stroke-width="2"/><path d="M7 2v18M3 6h2M3 10h2M3 14h2" stroke="#1c4a90"/><path d="M10 5h4v4h-4zM16 5h4v4h-4zM10 13h4v4h-4zM16 13h4v4h-4z" fill="#e88a10"/><path d="M10 9h4M16 9h4M10 17h4M16 17h4" stroke="#22287a" stroke-width="2"/></svg>总览</button>
  </footer>

  <!-- 任务栏 -->
  <div class="taskbar">
    <div class="dock">
      <button class="start" aria-label="开始"><svg width="24" height="24" viewBox="0 0 24 24"><path d="M0 4l10-2v9H0zM11 2l13-2v11H11zM0 12h10v9L0 20zM11 12h13v12l-13-2z" fill="#fff"/></svg></button>
      <label class="search">
        <svg width="26" height="26" viewBox="0 0 26 26"><circle cx="16" cy="9" r="8" fill="none" stroke="#111" stroke-width="2"/><path d="M10 15L1 25" stroke="#111" stroke-width="2"/></svg>
        <input type="text" placeholder="搜索">
        <svg width="104" height="46" viewBox="0 0 104 46">
          <path d="M8 8l16 34" stroke="#e0ac78" stroke-width="5"/><path d="M0 0h4v6h2V0h3v6h2V0h3v6h2V0h3v6c0 10-14 12-19 2z" fill="#eab98a"/><path d="M92 10L78 44" stroke="#e0ac78" stroke-width="5"/><ellipse cx="94" cy="6" rx="10" ry="12" fill="#eab98a"/>
          <path d="M30 10l8-10h30l6 5 8 1 2 10-3 6 4 6-7 6-2 8-10-1-8 5-12-6-8 2-6-8-12-4 4-8-2-6z" fill="#8cc63a"/><path d="M36 2c8-4 18-2 24 0 0 10-6 20-10 22-8-2-16-12-14-22z" fill="#e23b22"/><path d="M41 4l12-1-4 15-7-5z" fill="#f4a27c"/><path d="M44 34c-2-6 24-16 32-8 0 10-16 18-32 8z" fill="#e23b22"/><path d="M50 34c4-4 16-8 22-6-4 8-14 10-22 6z" fill="#f4a27c"/><path d="M56 0c14 0 20 8 14 18-6 6-12 0-10-6 4-4 2-8-4-12z" fill="#e3d2ea" stroke="#b277c0"/><path d="M38 34l12 4 2 8H40z" fill="#c8dc30"/>
        </svg>
      </label>
      <button class="app" aria-label="任务视图"><svg width="26" height="24" viewBox="0 0 26 24"><path d="M1 0v4h16V0M1 24v-4h16v4M1 7h16v10H1zM23 0v4M23 8v16" fill="none" stroke="#fff" stroke-width="1.600"/><path d="M21 6h4v4h-4z" fill="#fff"/></svg></button>
      <button class="app run" aria-label="Edge"><svg width="36" height="36" viewBox="0 0 36 36"><path d="M1 18A17 17 0 0135 16c0 6-5 9-10 9-4 0-5-2-4-4 3-5-1-10-7-10-7 0-12 4-13 7z" fill="url(#edge1)"/><path d="M1 18c1-6 7-9 12-8-4 3-5 8-4 12 2 7 10 11 20 8-8 9-28 6-28-12z" fill="#1268c0"/><path d="M13 16c-3 8 2 16 16 14-6 6-18 5-20-6 0-4 2-7 4-8z" fill="#0c4a98"/></svg></button>
      <button class="app" aria-label="Store"><svg width="36" height="36" viewBox="0 0 36 36"><path d="M10 8V2h16v6" fill="none" stroke="#28a8f0" stroke-width="2"/><path d="M1 6h34v27l-3 3H4l-3-3z" fill="#f4f4f4"/><path d="M11 13h6v7h-6z" fill="#f04e23"/><path d="M19 13h6v7h-6z" fill="#7db700"/><path d="M11 22h6v7h-6z" fill="#00a3ee"/><path d="M19 22h6v7h-6z" fill="#ffb800"/></svg></button>
      <button class="app" aria-label="邮件"><svg width="36" height="36" viewBox="0 0 36 36"><path d="M0 12L18 0l18 12v23H0z" fill="#0a62b8"/><path d="M4 11h28v16H4z" fill="#f2f2f2"/><path d="M0 12l18 14 18-14v23H0z" fill="#2ba4ee"/><path d="M0 35l36-23v23z" fill="#1a8ae0"/></svg></button>
      <button class="app run" aria-label="TIA"><svg width="36" height="36" viewBox="0 0 36 36"><path d="M0 0h36v36H0z" fill="#32354a"/><text x="2" y="17" font-size="18" fill="#fff">TIA</text><text x="1" y="33" font-size="13" fill="#98a6e8">V15.1</text></svg></button>
      <button class="app run" aria-label="文件资源管理器"><svg width="36" height="30" viewBox="0 0 36 30"><path d="M0 4l3-3h10l3 3h17v5H0z" fill="#e8a21e"/><path d="M0 6h36v23H0z" fill="#ffd257"/><path d="M7 30V17h22v13h-6v-6H13v6z" fill="#3a8fd8"/></svg></button>
    </div>
    <div class="behind">
      <i class="b-strip"></i><i class="b-rows"></i><i class="b-strip dark"></i>
      <ul class="b-tree">
        <li class="l4"><div><i class="arrow"></i><svg><use href="#db"/></svg>数据块_1 [DB7]</div><span></span><span></span></li>
        <li class="l4"><div><i class="arrow down"></i><svg><use href="#folder-group"/></svg>STA80-1</div><span></span><span></span></li>
      </ul>
      <i class="b-scroll"></i><i class="b-white"></i><i class="b-page"></i><i class="b-end"></i>
      <ul class="b-list"><li><i class="arrow right"></i></li><li><i class="arrow right"></i></li></ul>
    </div>
  </div>

  <!-- 上传预览对话框 -->
  <div class="dialog" role="dialog" aria-labelledby="dlg">
    <div class="dlg-title"><h2 id="dlg">上传预览</h2><button aria-label="关闭"><svg width="18" height="18"><use href="#close"/></svg></button></div>
    <div class="dlg-body">
      <div class="ask"><svg width="46" height="46" viewBox="0 0 46 46"><circle cx="23" cy="23" r="23" fill="#0c0cf5"/><path d="M12 15C12 1 34 2 34 15c0 8-8 9-8 15h-7c0-9 7-9 7-15 0-5-7-5-7 0zM19 33h8v7h-8z" fill="#fff"/></svg>检查从设备中上传的前提条件</div>
      <table class="preview">
        <colgroup><col class="c74"><col class="c45"><col class="c225"><col class="c548"><col><col class="c28"></colgroup>
        <thead><tr><th>状态</th><th class="bang">!</th><th>目标</th><th>消息</th><th>动作</th><th></th></tr></thead>
        <tbody>
          <tr><td class="g"><svg><use href="#up-plc"/></svg></td><td class="g"><svg><use href="#check-warn"/></svg></td><td class="g"><i class="arrow down"></i>MCP01-PLC01</td><td class="g">下载准备就绪。</td><td class="g"></td><td></td></tr>
          <tr><td></td><td></td><td></td><td></td><td></td><td></td></tr>
          <tr><td></td><td class="g"><svg><use href="#warn"/></svg></td><td class="g sub"><i class="arrow right"></i>不同的模块</td><td class="g">已组态模块与目标模块（在线）之间的差异</td><td></td><td></td></tr>
          <tr><td></td><td></td><td></td><td></td><td></td><td></td></tr>
          <tr><td></td><td></td><td></td><td></td><td></td><td></td></tr>
          <tr><td></td><td></td><td></td><td></td><td></td><td></td></tr>
          <tr><td></td><td></td><td></td><td></td><td></td><td></td></tr>
          <tr><td></td><td></td><td></td><td></td><td></td><td></td></tr>
          <tr><td></td><td></td><td></td><td></td><td></td><td></td></tr>
          <tr><td></td><td></td><td></td><td></td><td></td><td></td></tr>
          <tr><td></td><td></td><td></td><td></td><td></td><td></td></tr>
          <tr><td></td><td></td><td></td><td></td><td></td><td></td></tr>
          <tr><td></td><td></td><td></td><td></td><td></td><td></td></tr>
          <tr><td></td><td></td><td></td><td></td><td></td><td></td></tr>
        </tbody>
      </table>
      <div class="hscroll">
        <button aria-label="向左滚动"><svg width="16" height="16"><use href="#ch-left"/></svg></button>
        <div class="thumb"></div>
        <button aria-label="向右滚动"><svg width="16" height="16"><use href="#ch-right"/></svg></button>
      </div>
      <div class="row-end"><button class="btn" disabled>刷新</button></div>
    </div>
    <div class="dlg-foot"><button class="btn primary" disabled>从设备中上传</button><button class="btn" disabled>取消</button></div>
    <div class="blank"></div>
    <div class="watermark"><p>西门子工业　找答案</p><p class="url">support.industry.siemens.com/cs</p></div>
  </div>

  <!-- 网速悬浮球 -->
  <div class="speed">
    <div class="pill">
      <p><svg width="10" height="12" viewBox="0 0 10 12"><path d="M5 12V3" stroke="#3fb0f0" stroke-width="2"/><path d="M0 6l5-6 5 6z" fill="#3fb0f0"/></svg><b>0.6</b>K/s</p>
      <p><svg width="10" height="12" viewBox="0 0 10 12"><path d="M5 0v9" stroke="#30b840" stroke-width="2"/><path d="M0 6l5 6 5-6z" fill="#30b840"/></svg><b>0.2</b>K/s</p>
    </div>
    <div class="ball">
      <svg width="88" height="88" viewBox="0 0 88 88"><circle cx="44" cy="44" r="44" fill="#464c5e"/><path d="M44 6a38 38 0 010 76" fill="none" stroke="url(#ring)" stroke-width="2"/><path d="M44 82C24 80 6 64 6 44" fill="none" stroke="#e8c048" stroke-width="2"/><path d="M6 46c0-6 1-12 4-18" fill="none" stroke="#e07850" stroke-width="2"/></svg>
      <p>82<small>%</small></p>
    </div>
  </div>

  <!-- 右下角弹窗 -->
  <div class="toast">
    <div class="toast-head">
      <svg width="24" height="26" viewBox="0 0 24 26"><path d="M1.500 4Q12 0 22.500 4c0 10-3 17-10.500 21C4.500 21 1.500 14 1.500 4z" fill="none" stroke="#1f49ee" stroke-width="2.500"/><path d="M2 6l10 8 10-8" fill="none" stroke="#1f49ee" stroke-width="3"/></svg>
      <span>腾讯电脑管家 - 安装提示</span>
      <button aria-label="设置"><svg width="20" height="20" viewBox="0 0 20 20"><path d="M7 1.500l3 1 3-1 2 2.500 3 1v3l1 2-1 2v3l-3 1-2 2.500-3-1-3 1-2-2.500-3-1v-3l-1-2 1-2V5l3-1z" fill="none" stroke="#7a96a4" stroke-width="1.800"/><circle cx="10" cy="10" r="3" fill="none" stroke="#7a96a4" stroke-width="1.800"/></svg></button>
      <button aria-label="关闭"><svg width="18" height="18" viewBox="0 0 18 18"><path d="M1 1l16 16M17 1L1 17" stroke="#7a96a4" stroke-width="1.800"/></svg></button>
    </div>
    <div class="toast-body">
      <div class="lead">
        <svg width="60" height="56" viewBox="0 0 60 56"><path d="M0 0h30v6h30v14H0z" fill="#4ccafc"/><path d="M0 13h60v43H0z" fill="url(#fold)"/><path d="M27 21h6v7h-6zM27 31h6v17h-6z" fill="#c8f6ff"/></svg>
        <h3>发现有软件安装，推荐开启安装提示功能</h3>
      </div>
      <p>每当软件安装时提示，有效预防不知情下被偷偷安装软件</p>
      <div class="toast-foot">
        <label><input type="checkbox">不再提示</label>
        <button>暂不开启</button>
        <button class="go">立即开启</button>
      </div>
    </div>
  </div>
</body>

</html>
```
FILE: styles.css
```css
* {
  margin: 0;
  padding: 0;
  box-sizing: border-box;
}

body {
  display: flex;
  flex-direction: column;
  height: 100vh;
  overflow: hidden;
  position: relative;
  background: #fff;
  color: #111;
  font-family: "Open Sans", "Noto Sans CJK TC", sans-serif;
  font-size: 18px;
  line-height: 26px;
}

button,
input,
select {
  font: inherit;
  color: inherit;
  background: none;
  border: none;
}

ul {
  list-style: none;
}

svg {
  display: block;
  flex: none;
}

i,
small {
  font-style: normal;
}

h2 {
  font-size: 22px;
  line-height: 30px;
}

table {
  width: 100%;
  border-spacing: 0;
  table-layout: fixed;
}

.sprite {
  position: absolute;
}

/* 标题栏 */
.titlebar {
  display: flex;
  align-items: center;
  height: 34px;
  padding: 0 7px 0 8px;
  background: linear-gradient(#868686, #5c5c5c 10px, #1c1c1c 10px);
  border-bottom: 2px solid #000;
  color: #fff;
}

.titlebar .logo {
  width: 26px;
  height: 24px;
  margin: 8px 8px 0 0;
}

.titlebar h1 {
  flex: 1;
  font-size: 20px;
  font-weight: 500;
}

.win-btns {
  display: flex;
  align-items: center;
  gap: 9px;
}

/* 菜单 */
.menus {
  display: flex;
  justify-content: space-between;
  height: 76px;
  background: #cbcbcb;
  border-bottom: 2px solid #6a7080;
}

.menu {
  display: flex;
  gap: 25px;
  padding: 9px 0 0 16px;
  font-size: 18px;
}

.menu span {
  color: #3c3c4c;
}

.toolbar {
  display: flex;
  align-items: center;
  gap: 12px;
  height: 41px;
  padding-left: 18px;
}

.toolbar button {
  display: flex;
  align-items: center;
  gap: 9px;
  font-size: 19px;
}

.toolbar button svg {
  width: 24px;
  height: 24px;
}

.toolbar button span {
  padding-right: 4px;
}

.toolbar button:disabled {
  color: #8a8a8a;
}

.toolbar .undo {
  gap: 5px;
}

.toolbar .undo .pm {
  width: 10px;
  height: 20px;
}

.toolbar .grey {
  color: #858585;
}

.toolbar .blue {
  color: #1f42d8;
}

.sep {
  width: 1px;
  height: 34px;
  margin: 0 -2px 0 -4px;
  border-left: 1px dashed #999;
}

.toolbar input {
  width: 180px;
  height: 27px;
  padding-left: 5px;
  background: #fff;
  border: 2px solid #9c9c9c;
}

.toolbar input::placeholder {
  color: #666;
}

.brand {
  padding: 19px 36px 0 0;
  text-align: right;
  font-size: 21px;
}

.brand p {
  padding-right: 35px;
  line-height: 24px;
}

.brand strong {
  display: block;
  font-size: 24px;
  font-weight: 600;
  line-height: 22px;
  color: #6e6e6e;
}

/* 主区域 */
.work {
  display: flex;
  flex: 1;
  min-height: 0;
}

.strip-left {
  display: flex;
  flex-direction: column;
  width: 36px;
  background: #b1b1b1;
  border-right: 2px solid #2a3044;
}

.strip-left .gap {
  height: 38px;
  border-bottom: 2px solid #f0f0f0;
}

.strip-left button {
  width: 30px;
  height: 332px;
  writing-mode: vertical-rl;
  text-orientation: sideways;
  transform: rotate(180deg);
  color: #fff;
  font-size: 22px;
  font-weight: 700;
  line-height: 30px;
}

.strip-left::after {
  content: "";
  height: 2px;
  background: #f0f0f0;
}

.tree-panel {
  display: flex;
  flex-direction: column;
  width: 691px;
  background: #cbcbcb;
  border-right: 4px solid #1e2436;
}

.tree-title {
  display: flex;
  gap: 17px;
  height: 41px;
  padding: 2px 12px 0 9px;
  background: #ff9f00;
  color: #fff;
}

.tree-title h2,
.task-title h2 {
  flex: 1;
}

.tree-title svg,
.task-title svg {
  margin-top: 7px;
}

.tabs {
  height: 38px;
  padding: 5px 0 0 9px;
  border-bottom: 2px solid #949494;
}

.tabs button {
  width: 94px;
  height: 33px;
  padding: 0 16px 4px 0;
  background: linear-gradient(#fafafa, #eaeaea);
  border: 2px solid #949494;
  border-bottom: none;
  font-size: 21px;
  font-weight: 700;
  line-height: 26px;
}

.tree-tools {
  display: flex;
  align-items: center;
  height: 40px;
  padding: 0 12px;
  background: #eaeaea;
}

.tree-tools .dots {
  height: 34px;
  margin-left: auto;
  border-left: 2px dotted #aaa;
}

.tree-tools button {
  margin-left: 7px;
}

.tree-tools .on {
  padding: 4px;
  border: 2px solid #4a78e0;
  border-radius: 3px;
  background: #fff;
}

.band {
  height: 32px;
  background: #c2c2c2;
}

.tree-body {
  display: flex;
  flex: 1;
  min-height: 0;
  overflow: hidden;
}

.tree {
  flex: 1;
}

.tree li,
.b-tree li {
  display: flex;
  height: 28px;
  background: #efefef;
  border-bottom: 2px solid #fcfcfc;
}

.tree li:nth-child(even) {
  height: 29px;
}

.tree div,
.b-tree div {
  display: flex;
  flex: 1;
  align-items: center;
  gap: 7px;
  white-space: nowrap;
}

.tree svg,
.b-tree svg {
  width: 24px;
  height: 24px;
}

.tree span,
.b-tree span {
  display: flex;
  align-items: center;
  justify-content: center;
  width: 30px;
  border-left: 2px solid #fcfcfc;
}

.l2 div {
  padding-left: 60px;
}

.l3 div {
  padding-left: 87px;
}

.l4 div {
  padding-left: 114px;
}

.tree .selected {
  background: #b3c1dd;
}

.tree .selected div {
  outline: 2px dotted #3a6ad0;
  outline-offset: -1px;
}

.arrow {
  flex: none;
  width: 14px;
  height: 14px;
}

.arrow.right {
  background: #000;
  clip-path: polygon(4px 1px, 11px 7px, 4px 13px);
}

.arrow.down {
  background: #000;
  clip-path: polygon(1px 3px, 13px 3px, 7px 10px);
}

.ok,
.alert,
.half {
  width: 20px;
  height: 20px;
  border-radius: 50%;
  background: linear-gradient(160deg, #46d468, #12a03c);
}

.alert {
  background: linear-gradient(#ff9a50, #f05a10);
  color: #fff;
  text-align: center;
  line-height: 20px;
}

.half {
  background: linear-gradient(90deg, #1c3ce0 9px, #fff 9px, #fff 11px, #f86a18 11px);
}

/* 滚动条 */
.vscroll {
  display: flex;
  flex-direction: column;
  justify-content: space-between;
  width: 27px;
  background: #c2c2c2;
}

.vscroll button,
.hscroll button,
.thumb {
  display: flex;
  align-items: center;
  justify-content: center;
  width: 27px;
  height: 27px;
  background: linear-gradient(135deg, #f4f4f4, #dadada);
  border: 2px solid #9c9c9c;
  color: #555;
}

.hscroll {
  display: flex;
  gap: 2px;
  height: 27px;
  background: #c2c2c2;
}

.hscroll .thumb {
  flex: 1;
  background: linear-gradient(#ececec, #d8d8d8);
}

.hscroll .thumb::after {
  content: "";
  width: 11px;
  height: 12px;
  background: repeating-linear-gradient(90deg, #777 0 2px, transparent 2px 3px);
}

/* 折叠标题 */
.bar {
  display: flex;
  height: 35px;
  background: linear-gradient(#ececec 50%, #d8d8d8 50%);
  border-top: 4px solid #9a9a9a;
  border-bottom: 2px solid #8c8c8c;
}

.bar.split {
  height: 36px;
  border-top-color: #1e2436;
}

.bar button {
  display: flex;
  align-items: center;
  justify-content: center;
  width: 31px;
  border-right: 2px solid #999;
}

.bar h2 {
  padding-left: 6px;
  line-height: 29px;
}

.detail-tabs {
  height: 38px;
  border-bottom: 2px solid #949494;
}

.detail-tools {
  height: 41px;
  background: #eaeaea;
}

.detail {
  margin-bottom: 3px;
}

th {
  height: 28px;
  padding-left: 5px;
  background: linear-gradient(#e8e8e8, #d8d8d8 50%, #cacaca 50%, #e2e2e2);
  border-top: 2px solid #b4b4b4;
  border-bottom: 2px solid #b4b4b4;
  border-left: 2px solid #b4b4b4;
  text-align: left;
  font-size: 19px;
  font-weight: 400;
  line-height: 24px;
}

th:first-child {
  border-left: none;
}

.c27 { width: 27px; }
.c28 { width: 28px; }
.c33 { width: 33px; }
.c44 { width: 44px; }
.c45 { width: 45px; }
.c74 { width: 74px; }
.c76 { width: 76px; }
.c120 { width: 120px; }
.c168 { width: 168px; }
.c225 { width: 225px; }
.c548 { width: 548px; }

/* 工作区 */
.center {
  display: flex;
  flex: 1;
  flex-direction: column;
  min-width: 0;
  background: #3a445e;
  border-right: 4px solid #1e2436;
}

.canvas {
  flex: 1;
  display: flex;
  justify-content: flex-end;
}

.gear {
  margin-top: 50px;
}

.messages {
  display: grid;
  grid-template-columns: 1fr 27px;
  row-gap: 2px;
  background: #c2c2c2;
}

.messages tr {
  height: 28px;
  background: #efefef;
}

.messages tr:nth-child(even) {
  height: 29px;
}

.messages td {
  border-bottom: 2px solid #fcfcfc;
  white-space: nowrap;
}

.messages td svg {
  width: 24px;
  height: 24px;
  margin-left: 9px;
}

.messages td:last-child {
  padding-right: 15px;
  text-align: right;
}

td .arrow {
  display: inline-block;
  margin: 0 13px 0 7px;
  vertical-align: middle;
}

.messages .m1 {
  padding-left: 27px;
}

.messages .m2 {
  padding-left: 54px;
}

.messages .group {
  background: #e1e1e1;
}

.messages .current {
  background: #d0d5d9;
}

.messages .current td:first-child {
  outline: 1px dashed #777;
  outline-offset: -1px;
}

.messages .current td:nth-child(3) {
  background: #d8dde1;
}

.messages .vscroll {
  justify-content: flex-end;
  gap: 24px;
}

.messages .vscroll .thumb {
  background: repeating-linear-gradient(#666 0 2px, transparent 2px 4px) center / 13px 12px no-repeat, #ececec;
}

.messages .hscroll .push {
  margin-left: 53px;
}

/* 任务卡 */
.tasks {
  display: flex;
  flex-direction: column;
  width: 688px;
  background: #eaeaea;
}

.task-title {
  display: flex;
  gap: 11px;
  height: 37px;
  padding: 2px 13px 0 9px;
  background: #b1b1b1;
  color: #fff;
}

.task-title h2 {
  font-weight: 500;
}

.flip {
  transform: scaleX(-1);
}

.options {
  height: 43px;
  padding: 7px 9px 0;
  background: linear-gradient(#e8e8e8 10px, #fff 10px, #e2e2e2 32px, #ebebeb);
  border-bottom: 2px solid #949494;
}

.task-tools {
  display: flex;
  justify-content: flex-end;
  align-items: center;
  height: 40px;
  padding: 0 8px 4px 0;
}

.find {
  display: flex;
  flex: 1;
  flex-direction: column;
  padding: 26px 19px 0 17px;
  color: #808080;
}

.find > label {
  padding: 0 0 2px 5px;
}

.find .btns + label {
  padding-bottom: 5px;
}

.find select {
  height: 27px;
  appearance: none;
  border: 2px solid #8c8c8c;
  border-radius: 2px;
  background:
    conic-gradient(from 315deg at 50% 100%, #777 90deg, transparent 90deg) right 6px center / 12px 7px no-repeat,
    linear-gradient(90deg, #8c8c8c 2px, #f4f4f4 2px) right / 25px 100% no-repeat;
  opacity: 1;
}

.opts {
  display: flex;
  flex-direction: column;
  gap: 10px;
  padding-top: 15px;
}

.opts + .opts {
  padding-top: 22px;
}

.opts label {
  display: flex;
  align-items: center;
  gap: 5px;
  padding-left: 4px;
}

.opts input {
  appearance: none;
  width: 20px;
  height: 20px;
  border: 2px solid #999;
  border-radius: 3px;
}

.opts input[type="radio"] {
  border-radius: 50%;
}

.opts.range {
  padding-top: 12px;
}

.btns {
  display: flex;
  gap: 8px;
  width: 280px;
  padding: 8px 0 26px;
}

.btn {
  flex: 1;
  height: 30px;
  background: linear-gradient(#fff, #e2e2e2 50%, #efefef);
  border: 2px solid #909090;
  border-radius: 3px;
  color: #808080;
  line-height: 24px;
}

.strip-right {
  width: 36px;
  padding-top: 47px;
  background: #b1b1b1;
  border-left: 2px solid #2a3044;
}

.strip-right button {
  display: flex;
  align-items: center;
  gap: 6px;
  width: 30px;
  height: 110px;
  margin-bottom: 4px;
  padding-top: 4px;
  writing-mode: vertical-rl;
  text-orientation: sideways;
  background: #efefef;
  border: 2px solid #8c8c8c;
  border-left: none;
  font-size: 20px;
  font-weight: 700;
}

.strip-right .tab-lib {
  height: 86px;
  background: #cfcfcf;
  color: #555;
}

/* 底栏 */
.status {
  display: flex;
  height: 56px;
  padding-left: 52px;
  background: linear-gradient(#1c1c1c 44px, #000 44px, #000 53px, #fff 53px);
  color: #fff;
}

.portal {
  display: flex;
  align-items: center;
  gap: 17px;
  width: 219px;
  height: 44px;
  font-size: 22px;
  font-weight: 600;
}

.overview {
  display: flex;
  align-items: center;
  gap: 8px;
  width: 170px;
  height: 31px;
  margin-top: 5px;
  padding-left: 5px;
  background: #fff;
  color: #000;
  font-size: 20px;
  font-weight: 700;
}

/* Windows 任务栏 */
.taskbar {
  display: flex;
  height: 48px;
}

.dock {
  display: flex;
  width: 945px;
  background: #20353f;
}

.start {
  display: flex;
  align-items: center;
  justify-content: center;
  width: 72px;
  padding-bottom: 10px;
}

.search {
  display: flex;
  align-items: center;
  gap: 15px;
  width: 432px;
  padding: 0 10px 5px 18px;
  background: #f2f2f2;
  border-bottom: 2px solid #b8b8b8;
}

.search input {
  flex: 1;
  min-width: 0;
  font-size: 24px;
  outline: none;
}

.search input::placeholder {
  color: #222;
}

.app {
  display: flex;
  align-items: center;
  justify-content: center;
  width: 61px;
  margin-left: 14px;
  padding-bottom: 10px;
}

.app:nth-child(3) {
  margin-left: 7px;
}

.run {
  padding-bottom: 7px;
  border-bottom: 3px solid #76b9ed;
}

.behind {
  display: flex;
  flex: 1;
  overflow: hidden;
}

.b-strip {
  width: 40px;
  background: #b1b1b1;
  border-right: 2px solid #555c70;
}

.b-strip.dark {
  width: 38px;
}

.b-rows {
  width: 55px;
  background: linear-gradient(#efefef 29px, #fff 29px, #fff 31px, #efefef 31px);
}

.b-tree {
  width: 688px;
  margin-top: -11px;
}

.b-tree li {
  height: 29px;
}

.b-scroll {
  width: 30px;
  background: #c8c8c8;
  border-right: 4px solid #1e2436;
}

.b-white {
  width: 42px;
  border-right: 3px solid #000;
}

.b-page {
  flex: 1;
}

.b-end {
  width: 32px;
  background: #c2c2c2;
  border-right: 4px solid #1e2436;
}

.b-list {
  width: 29px;
}

.b-list li {
  height: 29px;
  padding: 10px 0 0 6px;
  background: #efefef;
  border-bottom: 2px solid #fff;
}

.b-list .arrow {
  display: block;
}

/* 对话框 */
.dialog {
  position: absolute;
  top: 338px;
  left: 0;
  right: 0;
  width: 1182px;
  margin: 0 auto;
  background: #cbcbcb;
  border: 2px solid #333;
  border-bottom: 10px solid #555;
  outline: 1px solid #fff;
}

.dlg-title {
  display: flex;
  height: 31px;
  background: linear-gradient(#a6a6a6, #8a8a8a 11px, #575757 11px);
  color: #c8c8c8;
}

.dlg-title h2 {
  flex: 1;
  padding-left: 6px;
  font-weight: 400;
  line-height: 28px;
}

.dlg-title button {
  width: 30px;
  padding-left: 5px;
  border-left: 2px solid #bbb;
  color: #fff;
}

.dlg-body {
  height: 593px;
  padding: 9px 18px 0 17px;
}

.ask {
  display: flex;
  align-items: center;
  gap: 9px;
  height: 63px;
  padding: 0 0 17px 1px;
}

.preview tr {
  height: 29px;
}

.preview tbody tr:nth-child(even) {
  height: 28px;
}

.preview td {
  padding-left: 5px;
  background: #efefef;
  border-bottom: 2px solid #fcfcfc;
  border-left: 2px solid #fcfcfc;
  white-space: nowrap;
}

.preview td:first-child {
  padding-left: 22px;
  border-left: none;
}

.preview td:nth-child(2) {
  padding-left: 8px;
}

.preview .g {
  background: #e1e1e1;
}

.preview td svg {
  width: 24px;
  height: 24px;
}

.preview td:nth-child(3) .arrow {
  margin: 0 15px 0 0;
}

.preview .sub {
  padding-left: 32px;
}

.preview .bang {
  color: #3a78c8;
}

.preview + .hscroll {
  margin-top: 6px;
}

.row-end,
.dlg-foot {
  display: flex;
  justify-content: flex-end;
  gap: 10px;
  padding-top: 12px;
}

.row-end .btn,
.dlg-foot .btn {
  flex: none;
  width: 135px;
}

.dlg-foot {
  height: 67px;
  padding: 18px 18px 0;
  background: #b1b1b1;
}

.dlg-foot .primary {
  width: 255px;
  background: linear-gradient(#d8f0fa, #a0daf4 50%, #5cc0ec 50%, #a8e2f8);
  border-color: #2e8fc0;
}

.blank {
  position: absolute;
  top: 205px;
  left: 212px;
  width: 753px;
  height: 290px;
  background: #fff;
}

.watermark {
  position: absolute;
  top: 345px;
  left: 378px;
  width: 420px;
  text-align: center;
  transform: rotate(-30deg);
  color: #fff;
  font-size: 41px;
  font-weight: 700;
  line-height: 40px;
  white-space: nowrap;
  -webkit-text-stroke: 1px #e6e6e6;
}

.watermark .url {
  font-family: "Liberation Sans", sans-serif;
  font-size: 27px;
  font-weight: 400;
  line-height: 27px;
}

/* 悬浮球 */
.speed {
  position: absolute;
  top: 318px;
  right: 8px;
  display: flex;
  align-items: center;
  color: #8c919c;
}

.pill {
  width: 135px;
  margin-right: -44px;
  padding-left: 17px;
  border-radius: 31px;
  background: #31353f;
}

.pill p {
  display: flex;
  align-items: center;
  height: 31px;
}

.pill b {
  margin: 0 1px 0 9px;
  color: #fff;
  font-weight: 600;
}

.ball {
  position: relative;
  border-radius: 50%;
  box-shadow: 0 2px 6px rgba(0, 0, 0, .4);
}

.ball p {
  position: absolute;
  inset: 0;
  padding-left: 2px;
  text-align: center;
  color: #f2f2f2;
  font-size: 34px;
  line-height: 84px;
}

.ball small {
  font-size: 16px;
}

/* 弹窗 */
.toast {
  position: absolute;
  right: 7px;
  bottom: 67px;
  width: 525px;
  height: 320px;
  background: #fff;
  border: 1px solid #7cc4ea;
  color: #000;
  font-family: "Noto Sans CJK SC", sans-serif;
}

.toast-head {
  display: flex;
  gap: 5px;
  height: 66px;
  padding: 21px 31px 0;
  background: linear-gradient(90deg, #def2fd, #b0eafb);
}

.toast-head span {
  flex: 1;
}

.toast-head button {
  height: 20px;
  margin-left: 23px;
}

.toast-body {
  padding: 25px 31px 0;
}

.lead {
  display: flex;
  gap: 14px;
  height: 83px;
}

.lead h3 {
  font-size: 24px;
  font-weight: 400;
  line-height: 29px;
}

.toast-foot {
  display: flex;
  gap: 15px;
  padding-top: 60px;
}

.toast-foot label {
  display: flex;
  flex: 1;
  gap: 8px;
  padding: 2px 0 0 3px;
}

.toast-foot input {
  appearance: none;
  width: 18px;
  height: 18px;
  margin-top: 4px;
  border: 1px solid #bbb;
}

.toast-foot button {
  width: 120px;
  height: 39px;
  padding-bottom: 2px;
  border: 1px solid #ddd;
  border-radius: 2px;
}

.toast-foot .go {
  background: #1f49ee;
  border-color: #1f49ee;
  color: #fff;
}
```
